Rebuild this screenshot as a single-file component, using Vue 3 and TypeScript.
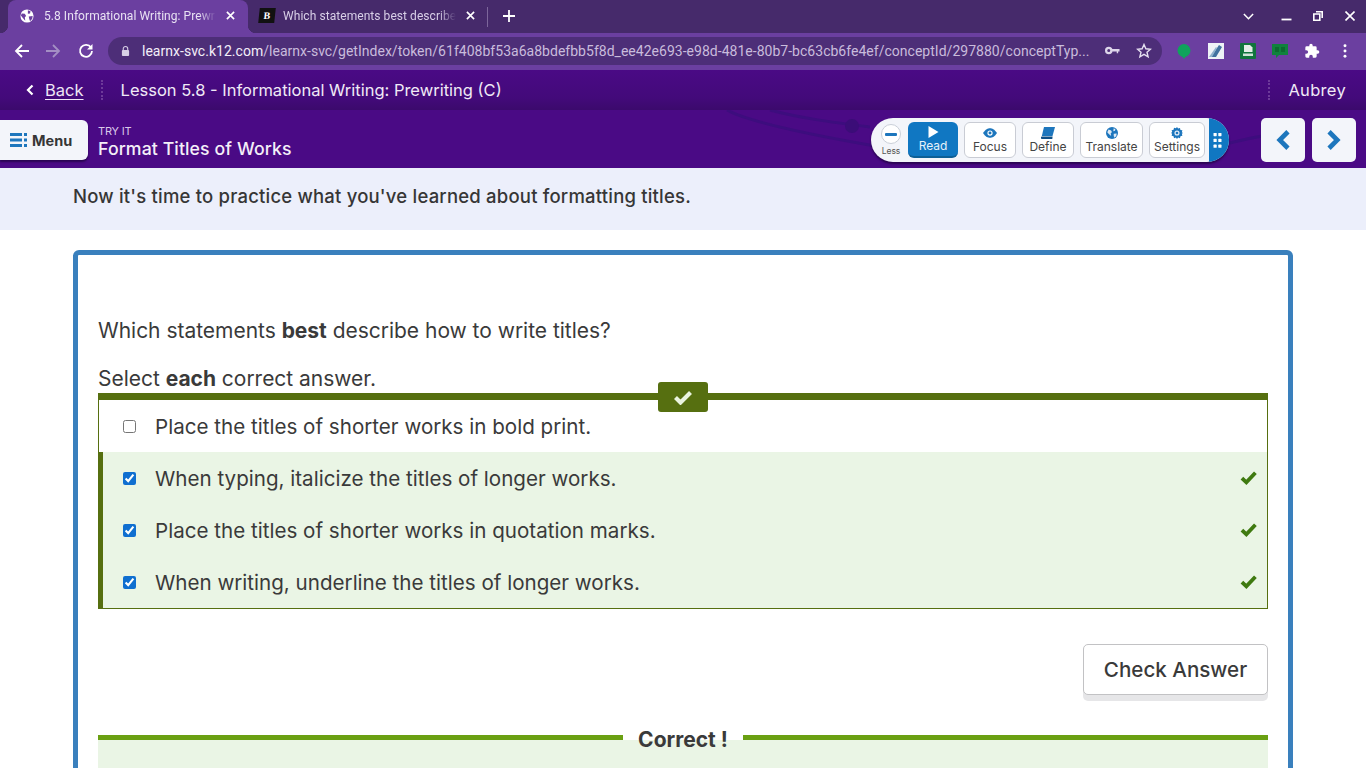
<script setup lang="ts">
interface Choice { text: string; checked: boolean }
const choices: Choice[] = [
  { text: 'Place the titles of shorter works in bold print.', checked: false },
  { text: 'When typing, italicize the titles of longer works.', checked: true },
  { text: 'Place the titles of shorter works in quotation marks.', checked: true },
  { text: 'When writing, underline the titles of longer works.', checked: true },
]
</script>

<template>
  <div class="page">
    <div class="tabstrip">
      <div class="tab active">
        <svg class="fav" viewBox="0 0 16 16"><circle cx="8" cy="8" r="7.500" fill="#fff"/><path d="M2 5l3.500.5L7 8 5.500 9.500l.5 4L3 10 1 7.500zM9 1.500l3 1-.5 2.500L9 5.500zM10 8.500l4.500-.5-.5 3-2.500 3-1-3z" fill="#6b3fa0"/></svg>
        <span class="tab-title">5.8 Informational Writing: Prewr</span>
        <svg class="x" viewBox="0 0 10 10"><path d="M1 1l8 8M9 1l-8 8" stroke="#fff" stroke-width="1.800"/></svg>
      </div>
      <div class="tab second">
        <span class="bfav">B</span>
        <span class="tab-title t2">Which statements best describe</span>
        <svg class="x" viewBox="0 0 10 10"><path d="M1 1l8 8M9 1l-8 8" stroke="#fff" stroke-width="1.800"/></svg>
      </div>
      <span class="tabsep"></span>
      <svg class="plus" viewBox="0 0 12 12"><path d="M6 0v12M0 6h12" stroke="#fff" stroke-width="1.800"/></svg>
      <span class="grow"></span>
      <svg class="caret" viewBox="0 0 10 6"><path d="M.8.8L5 5 9.200.8" fill="none" stroke="#fff" stroke-width="1.400"/></svg>
      <svg class="win wmin" viewBox="0 0 10 10"><path d="M0 8.500h10" stroke="#fff" stroke-width="1.800"/></svg>
      <svg class="win wmax" viewBox="0 0 10 10"><path d="M3 .8h6.200V7M.8 3h6v6.200h-6z" fill="none" stroke="#fff" stroke-width="1.600"/></svg>
      <svg class="win wclose" viewBox="0 0 10 10"><path d="M.5.500l9 9M9.500.5l-9 9" stroke="#fff" stroke-width="1.600"/></svg>
    </div>

    <div class="toolbar">
      <svg class="nav n1" viewBox="0 0 16 16"><path d="M15 8H2M8 2L2 8l6 6" fill="none" stroke="#fff" stroke-width="1.800"/></svg>
      <svg class="nav n2" viewBox="0 0 16 16"><path d="M1 8h13M8 2l6 6-6 6" fill="none" stroke="#a48fc4" stroke-width="1.800"/></svg>
      <svg class="nav n3" viewBox="0 0 16 16"><path d="M13 4.500A6 6 0 1 0 14 8" fill="none" stroke="#fff" stroke-width="1.800"/><path d="M14.500 1v5.500H9z" fill="#fff"/></svg>
      <div class="omni">
        <svg class="lock" viewBox="0 0 10 12"><path d="M2.500 5V3.500a2.500 2.500 0 0 1 5 0V5" fill="none" stroke="#d8cfe6" stroke-width="1.200"/><rect x="1" y="5" width="8" height="6.500" rx="1" fill="#d8cfe6"/></svg>
        <span class="url"><b>learnx-svc.k12.com</b>/learnx-svc/getIndex/token/61f408bf53a6a8bdefbb5f8d_ee42e693-e98d-481e-80b7-bc63cb6fe4ef/conceptId/297880/conceptTyp...</span>
        <svg class="key" viewBox="0 0 16 9"><circle cx="4" cy="4.500" r="2.800" fill="none" stroke="#ddd5ea" stroke-width="2.400"/><path d="M7 3h8.500v2.500H14v2h-1.500v-2H7z" fill="#ddd5ea"/></svg>
        <svg class="star" viewBox="0 0 16 16"><path d="M8 1.500l1.900 4.300 4.600.4-3.500 3 1.100 4.600L8 11.400l-4.100 2.400L5 9.200l-3.500-3 4.600-.4z" fill="none" stroke="#e5dff0" stroke-width="1.400"/></svg>
      </div>
      <svg class="ext e1" viewBox="0 0 16 16"><circle cx="8" cy="7.500" r="6.500" fill="#0fa35c"/><path d="M6 13l2 3 2-3z" fill="#0fa35c"/></svg>
      <svg class="ext e2" viewBox="0 0 16 16"><rect width="16" height="16" fill="#eef2f6"/><path d="M3 14L11 2l3 2-6 10z" fill="#41729f"/><path d="M1 14L8 4l1 1-5 9z" fill="#8fb1cc"/></svg>
      <svg class="ext e3" viewBox="0 0 16 16"><rect width="16" height="16" rx="1" fill="#12753c"/><path d="M4 2h6l2.500 2.500V9H4z" fill="#e5efe8"/><path d="M3 10.500h10V13H3z" fill="#cfe3d6"/></svg>
      <svg class="ext e4" viewBox="0 0 16 14"><path d="M0 0h16v11H7l-3 3v-3H0z" fill="#10823d"/><path d="M3 3h4v5H3zM9 3h4v5H9z" fill="#0c6a30"/></svg>
      <svg class="ext e5" viewBox="0 0 24 24"><path fill="#fff" d="M20.500 11H19V7a2 2 0 0 0-2-2h-4V3.500a2.500 2.500 0 0 0-5 0V5H4a2 2 0 0 0-2 2v3.800h1.500a2.700 2.700 0 0 1 0 5.400H2V20a2 2 0 0 0 2 2h3.800v-1.500a2.700 2.700 0 0 1 5.400 0V22H17a2 2 0 0 0 2-2v-4h1.500a2.500 2.500 0 0 0 0-5z"/></svg>
      <svg class="ext e6" viewBox="0 0 4 16"><circle cx="2" cy="2" r="1.700" fill="#fff"/><circle cx="2" cy="8" r="1.700" fill="#fff"/><circle cx="2" cy="14" r="1.700" fill="#fff"/></svg>
    </div>

    <header class="lessonbar">
      <svg class="back-ico" viewBox="0 0 8 12"><path d="M6.500 1.500L2 6l4.500 4.500" fill="none" stroke="#fff" stroke-width="2.200"/></svg>
      <a class="back">Back</a>
      <span class="dots"></span>
      <span class="lesson">Lesson 5.8 - Informational Writing: Prewriting (C)</span>
      <span class="grow"></span>
      <span class="dots d2"></span>
      <span class="user">Aubrey</span>
    </header>

    <div class="titlebar">
      <svg class="swirl" viewBox="0 0 720 58" preserveAspectRatio="none">
        <path d="M167 0C185 10 240 23 315 36M210 0C240 8 270 12 310 17M669 33C680 31 690 28 702 26" fill="none" stroke="#3d0d7e" stroke-width="3"/>
        <circle cx="292" cy="16" r="7" fill="#3b0d78"/>
      </svg>
      <button class="menu">
        <svg viewBox="0 0 17 14"><path d="M0 0h12v3H0zM0 5.500h12v3H0zM0 11h12v3H0zM14 0h3v3h-3zM14 5.500h3v3h-3zM14 11h3v3h-3z" fill="#1d76bd"/></svg>
        <span>Menu</span>
      </button>
      <div class="heading">
        <span class="tryit">TRY IT</span>
        <span class="htitle">Format Titles of Works</span>
      </div>
      <span class="grow"></span>
      <div class="tools">
        <div class="less">
          <span class="less-btn"><i></i></span>
          <span class="less-label">Less</span>
        </div>
        <div class="tool read">
          <svg viewBox="0 0 12 12"><path d="M1.500 0l10 6-10 6z" fill="#fff"/></svg>
          <span>Read</span>
        </div>
        <div class="tool">
          <svg viewBox="0 0 16 11"><path d="M0 5.500C3 1 5.500 0 8 0s5 1 8 5.500C13 10 10.500 11 8 11S3 10 0 5.500z" fill="#1d76bd"/><circle cx="8" cy="5.500" r="3" fill="#fff"/><circle cx="8" cy="5.500" r="1.700" fill="#1d76bd"/></svg>
          <span>Focus</span>
        </div>
        <div class="tool">
          <svg viewBox="0 0 14 12"><path d="M3 0h11l-2.500 9H.8z" fill="#1d76bd"/><path d="M.8 9.500h10.800l-.3 2.500H1.500a1.300 1.300 0 0 1-.7-2.500z" fill="#0e4f86"/></svg>
          <span>Define</span>
        </div>
        <div class="tool">
          <svg viewBox="0 0 14 14"><circle cx="7" cy="7" r="7" fill="#1d76bd"/><path d="M3 3l3 1 1 2-1.500 1 .5 3.500L3 8 1.500 6zM9 1.500l2 1-.5 2L8.500 5zM9 8l3.500-.5-.5 3-2 2-1-2z" fill="#dfeaf5"/></svg>
          <span>Translate</span>
        </div>
        <div class="tool">
          <svg viewBox="0 0 14 14"><path d="M7 0l1.300 1.800 2.200-.7.500 2.300 2.300.5-.7 2.200L14 7l-1.400 1 .7 2.200-2.300.5-.5 2.300-2.200-.7L7 14l-1.300-1.700-2.200.7-.5-2.300-2.300-.5.7-2.200L0 7l1.400-1.100-.7-2.200 2.300-.5.500-2.300 2.200.7z" fill="#1d76bd"/><circle cx="7" cy="7" r="3" fill="#dfeaf5"/><circle cx="7" cy="7" r="1.500" fill="#1d76bd"/></svg>
          <span>Settings</span>
        </div>
        <div class="grip">
          <svg viewBox="0 0 8 15"><g fill="#fff"><rect width="3.200" height="3.200" rx=".6"/><rect x="4.800" width="3.200" height="3.200" rx=".6"/><rect y="5.800" width="3.200" height="3.200" rx=".6"/><rect x="4.800" y="5.800" width="3.200" height="3.200" rx=".6"/><rect y="11.600" width="3.200" height="3.200" rx=".6"/><rect x="4.800" y="11.600" width="3.200" height="3.200" rx=".6"/></g></svg>
        </div>
      </div>
      <button class="arrow first">
        <svg viewBox="0 0 14 20"><path d="M11.500 2.500L4 10l7.500 7.500" fill="none" stroke="#1d76bd" stroke-width="4.200"/></svg>
      </button>
      <button class="arrow">
        <svg viewBox="0 0 14 20"><path d="M2.500 2.500L10 10l-7.500 7.500" fill="none" stroke="#1d76bd" stroke-width="4.200"/></svg>
      </button>
    </div>

    <div class="banner">Now it's time to practice what you've learned about formatting titles.</div>

    <main class="card">
      <p class="q">Which statements <b>best</b> describe how to write titles?</p>
      <p class="q sel">Select <b>each</b> correct answer.</p>

      <div class="answers">
        <span class="answers-badge">
          <svg viewBox="0 0 20 15"><path d="M2.500 7.500L7.500 12.500 17.500 2.500" fill="none" stroke="#eaf4df" stroke-width="4.200"/></svg>
        </span>
        <label v-for="c in choices" :key="c.text" class="row" :class="{ on: c.checked }">
          <input type="checkbox" :checked="c.checked" />
          <span class="row-text">{{ c.text }}</span>
          <svg v-if="c.checked" class="tick" viewBox="0 0 16 14"><path d="M1.800 7.500L6 11.500 14.500 2.500" fill="none" stroke="#3f7a10" stroke-width="3.600"/></svg>
        </label>
      </div>

      <div class="actions">
        <button class="check">Check Answer</button>
      </div>

      <div class="result">
        <span class="result-label">Correct !</span>
      </div>
    </main>
  </div>
</template>

<style>
html, body { margin: 0; height: 768px; overflow: hidden; background: #fff; }
</style>

<style scoped>
.page { width: 1366px; height: 768px; overflow: hidden; background: #fff; font-family: Inter, "Liberation Sans", sans-serif; color: #363636; }
.grow { flex: 1; }
button { font-family: inherit; cursor: pointer; }

.tabstrip { height: 33px; background: #462a6b; display: flex; align-items: flex-end; padding-left: 8px; box-sizing: border-box; }
.tab { height: 33px; box-sizing: border-box; display: flex; align-items: center; padding: 0 12px 2px 0; flex: none; }
.tab.active { position: relative; width: 240px; background: #6b3fa0; border-radius: 8px 8px 0 0; padding: 0 13px 2px 12px; }
.tab.active::before, .tab.active::after { content: ""; position: absolute; bottom: 0; width: 8px; height: 8px; }
.tab.active::before { left: -8px; background: radial-gradient(circle at 0 0, transparent 8px, #6b3fa0 8.500px); }
.tab.active::after { right: -8px; background: radial-gradient(circle at 100% 0, transparent 8px, #6b3fa0 8.500px); }
.fav { width: 14px; height: 14px; flex: none; margin-right: 10px; }
.tab-title { font: 12px Roboto, sans-serif; color: #e9e2f3; white-space: nowrap; overflow: hidden; flex: 1; width: 0; letter-spacing: .06px; -webkit-mask-image: linear-gradient(90deg, #000 90%, transparent); mask-image: linear-gradient(90deg, #000 90%, transparent); }
.t2 { color: #d8cfe7; }
.x { width: 9px; height: 9px; flex: none; margin-left: 10px; }
.tab.second { width: 238px; padding: 0 11px 2px 11px; }
.bfav { width: 16px; height: 15px; margin-right: 8px; background: #111; color: #fff; font: 900 10px/15px "Liberation Serif", serif; text-align: center; flex: none; transform: skewX(-6deg); }
.tabsep { width: 1px; height: 20px; background: #7d669b; margin: 0 0 6px 1px; }
.plus { width: 12px; height: 12px; margin: 0 0 11px 15px; }
.caret { width: 11px; height: 7px; margin: 0 27px 13px 0; }
.win { width: 10px; height: 10px; margin-bottom: 12px; }
.wmin { width: 11px; margin-right: 21px; }
.wmax { margin-right: 22px; }
.wclose { margin-right: 11px; }

.toolbar { height: 37px; background: #6b3fa0; display: flex; align-items: center; box-sizing: border-box; padding: 0 0 2px 14px; }
.nav { width: 16px; height: 16px; flex: none; }
.n2 { margin-left: 15px; }
.n3 { margin-left: 17px; }
.omni { width: 1054px; height: 28px; background: #4d2e78; border-radius: 14px; margin-left: 14px; display: flex; align-items: center; box-sizing: border-box; padding: 0 10px 0 13px; flex: none; }
.lock { width: 9px; height: 12px; flex: none; margin-right: 12px; }
.url { font: 14px Roboto, sans-serif; letter-spacing: .023px; color: #c9bcdc; white-space: nowrap; overflow: hidden; flex: 1; width: 0; }
.url b { font-weight: 400; color: #f3eff8; }
.key { width: 15px; height: 9px; margin: 0 16px 0 15px; flex: none; }
.star { width: 16px; height: 16px; flex: none; }
.ext { flex: none; }
.e1 { width: 16px; height: 16px; margin-left: 14px; }
.e2 { width: 16px; height: 16px; margin-left: 16px; }
.e3 { width: 16px; height: 16px; margin-left: 16px; }
.e4 { width: 16px; height: 14px; margin-left: 16px; }
.e5 { width: 16px; height: 16px; margin-left: 16px; }
.e6 { width: 4px; height: 14px; margin-left: 23px; }

.lessonbar { height: 40px; background: linear-gradient(#4a0a85, #430a7a 70%, #3b0a6c); display: flex; align-items: center; color: #f0e9f6; box-sizing: border-box; padding-right: 20px; }
.back-ico { width: 8px; height: 12px; margin-left: 26px; }
.back { font-size: 16.500px; color: #eee6f5; text-decoration: underline; text-underline-offset: 3px; margin-left: 11px; }
.dots { width: 0; height: 20px; border-left: 2px dotted #6d3a99; margin: 0 18px 0 17px; }
.lesson { font-size: 16.500px; }
.dots.d2 { margin: 0 18px 0 0; }
.user { font-size: 16.500px; letter-spacing: .3px; }

.titlebar { position: relative; height: 58px; box-sizing: border-box; padding-top: 2px; background: #4a0a85; display: flex; align-items: center; }
.swirl { position: absolute; left: 560px; top: 0; width: 720px; height: 58px; }
.menu { position: relative; width: 88px; height: 40px; border: 0; background: #f3f5fa; border-radius: 0 6px 6px 0; box-shadow: 0 2px 2px #2a0552; display: flex; align-items: center; padding: 0 0 0 10px; gap: 5px; font-size: 14.500px; font-weight: 700; color: #363636; }
.menu svg { width: 17px; height: 14px; }
.heading { position: relative; display: flex; flex-direction: column; margin-left: 10px; color: #f4eff8; padding-top: 4px; }
.tryit { font-size: 11px; line-height: 14px; color: #d9c8e9; letter-spacing: -.2px; }
.htitle { font-size: 17.700px; line-height: 22px; font-weight: 500; letter-spacing: .1px; }
.tools { position: relative; width: 358px; height: 44px; box-sizing: border-box; background: #f3f5fa; border-radius: 22px; display: flex; align-items: center; padding-left: 8px; margin-right: 32px; box-shadow: 0 2px 2px #2a0552; overflow: hidden; flex: none; }
.less { width: 24px; display: flex; flex-direction: column; align-items: center; margin-right: 5px; flex: none; }
.less-btn { width: 20px; height: 20px; background: #fff; border: 1px solid #c9cfd8; border-radius: 50%; display: flex; align-items: center; justify-content: center; box-sizing: border-box; margin-bottom: 2px; }
.less-btn i { display: block; width: 12px; height: 3px; background: #1d76bd; border-radius: 1px; }
.less-label { font-size: 8.500px; color: #555; line-height: 10px; }
.tool { height: 36px; width: 52px; flex: none; box-sizing: border-box; background: #fff; border: 1px solid #c9ccd4; border-radius: 6px; margin-right: 6px; display: flex; flex-direction: column; align-items: center; justify-content: center; font-size: 12px; line-height: 14px; color: #444; }
.tool svg { width: 14px; height: 12px; margin-bottom: 1px; }
.tool.read { background: #1077c2; border: 0; border-bottom: 2px solid #0d5f96; color: #e6f1fa; width: 50px; }
.tool:nth-child(5) { width: 63px; }
.tool:nth-child(6) { width: 56px; margin-right: 4px; }
.grip { flex: 1; align-self: stretch; background: #1077c2; display: flex; align-items: center; padding-left: 4px; }
.grip svg { width: 9px; height: 15px; }
.arrow { width: 44px; height: 44px; border: 0; background: #f3f5fa; border-radius: 5px; display: flex; align-items: center; justify-content: center; padding: 0; margin-right: 10px; flex: none; position: relative; }
.arrow.first { margin-right: 7px; }
.arrow svg { width: 16px; height: 22px; }

.banner { height: 62px; box-sizing: border-box; background: #eceffb; padding: 17px 0 0 73px; font-size: 18.500px; line-height: 22px; font-weight: 500; color: #363636; letter-spacing: .2px; }

.card { margin: 20px 0 0 73px; width: 1220px; height: 600px; box-sizing: border-box; border: 5px solid #3a80bd; border-radius: 6px; padding: 64px 20px 0; }
.q { margin: 0; font-size: 21px; line-height: 24px; letter-spacing: -.02px; color: #3a3a3a; }
.q b { font-weight: 700; }
.q.sel { margin-top: 25px; height: 25px; line-height: 22px; }

.answers { position: relative; width: 1170px; box-sizing: border-box; border-top: 7px solid #566f10; border-right: 1px solid #566f10; border-bottom: 1px solid #566f10; border-left: 1px solid #566f10; }
.answers-badge { position: absolute; left: 559px; top: -18px; width: 50px; height: 30px; background: #566f10; border-radius: 3px; display: flex; align-items: center; justify-content: center; }
.answers-badge svg { width: 20px; height: 15px; }
.row { height: 52px; display: flex; align-items: center; box-sizing: border-box; padding-left: 24px; font-size: 20.600px; color: #3a3a3a; }
.row.on { background: #eaf5e5; border-left: 5px solid #566f10; margin-left: -1px; padding-left: 20px; }
.row input { width: 13px; height: 13px; margin: 0 19px 0 0; accent-color: #0f6fd0; flex: none; }
.row-text { flex: 1; }
.tick { width: 17px; height: 15px; margin: 0 10.500px 2px 0; flex: none; }

.actions { display: flex; justify-content: flex-end; margin-top: 35px; }
.check { width: 185px; height: 51px; background: #fff; border: 1px solid #c2c2c4; border-radius: 5px; box-shadow: 0 6px 0 #e6e6e8; font-size: 20.600px; font-weight: 500; color: #3a3a3a; padding: 0; }

.result { margin-top: 40px; height: 60px; border-top: 5px solid #6aa012; background: #eaf5e5; position: relative; }
.result-label { position: absolute; left: 525px; top: -16px; width: 120px; height: 16px; background: #fff; text-align: center; font-size: 21px; line-height: 32px; font-weight: 700; color: #3a3a3a; }
</style>
